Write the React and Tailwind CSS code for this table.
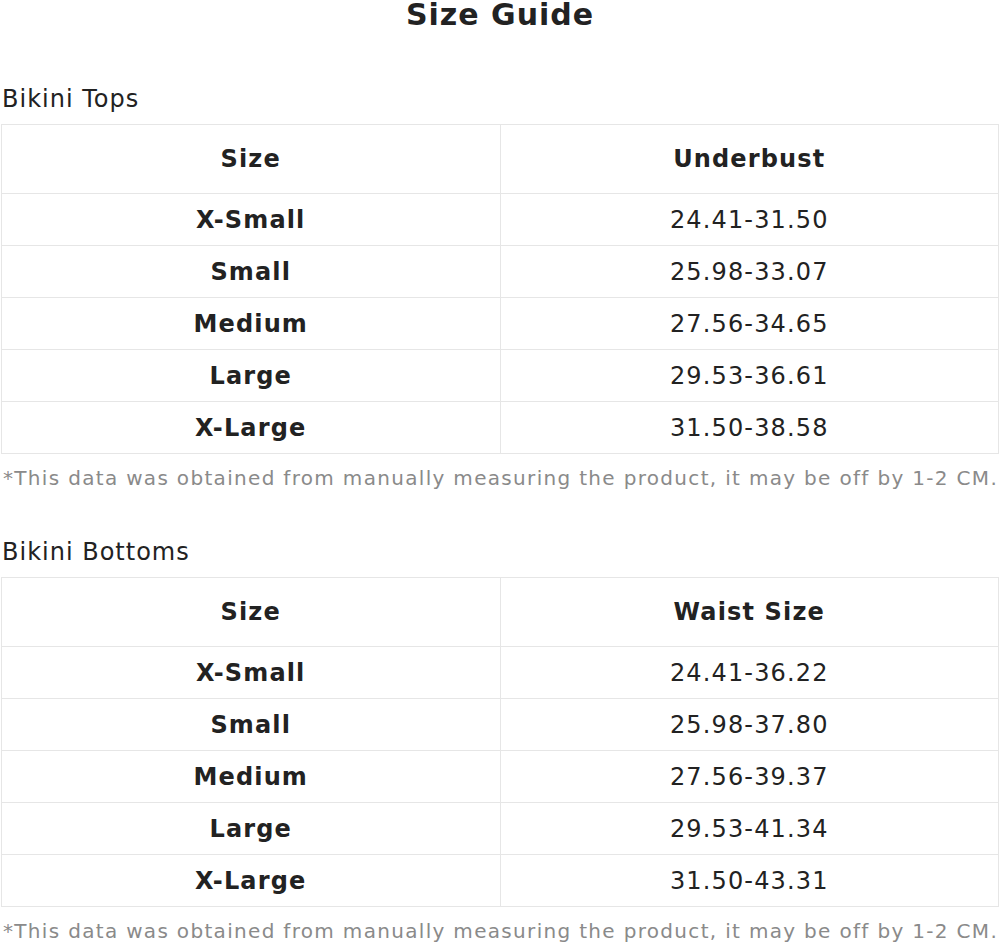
import React from "react";

const tops = [
    ["X-Small", "24.41-31.50"],
    ["Small", "25.98-33.07"],
    ["Medium", "27.56-34.65"],
    ["Large", "29.53-36.61"],
    ["X-Large", "31.50-38.58"],
];

const bottoms = [
    ["X-Small", "24.41-36.22"],
    ["Small", "25.98-37.80"],
    ["Medium", "27.56-39.37"],
    ["Large", "29.53-41.34"],
    ["X-Large", "31.50-43.31"],
];

const SizeTable = ({ title, measure, rows }) => (
    <section>
        <h2 className="text-[24px] leading-[36px] tracking-[1px] text-[#222] px-[2px]">{title}</h2>
        <table className="mt-[7px] ml-px w-[998px] border-collapse table-fixed text-[24px] tracking-[1.15px] text-[#222]">
            <thead>
                <tr className="h-[69px]">
                    <th className="border border-[#e6e6e6] font-bold">Size</th>
                    <th className="border border-[#e6e6e6] font-bold">{measure}</th>
                </tr>
            </thead>
            <tbody>
                {rows.map(([size, value]) => (
                    <tr key={size} className="h-[52px]">
                        <td className="border border-[#e6e6e6] text-center font-bold">{size}</td>
                        <td className="border border-[#e6e6e6] text-center">{value}</td>
                    </tr>
                ))}
            </tbody>
        </table>
        <p className="mt-[8px] px-[3px] text-[20px] leading-[32px] tracking-[1.32px] text-[#8a8a8a] whitespace-nowrap">
            *This data was obtained from manually measuring the product, it may be off by 1-2 CM.
        </p>
    </section>
);

export default function App() {
    return (
        <div className="w-[1000px] bg-white font-['DejaVu_Sans',sans-serif]">
            <h1 className="text-center text-[30px] leading-[30px] font-bold tracking-[1px] text-[#222]">Size Guide</h1>
            <div className="mt-[51px]">
                <SizeTable title="Bikini Tops" measure="Underbust" rows={tops} />
            </div>
            <div className="mt-[40px]">
                <SizeTable title="Bikini Bottoms" measure="Waist Size" rows={bottoms} />
            </div>
        </div>
    );
}
